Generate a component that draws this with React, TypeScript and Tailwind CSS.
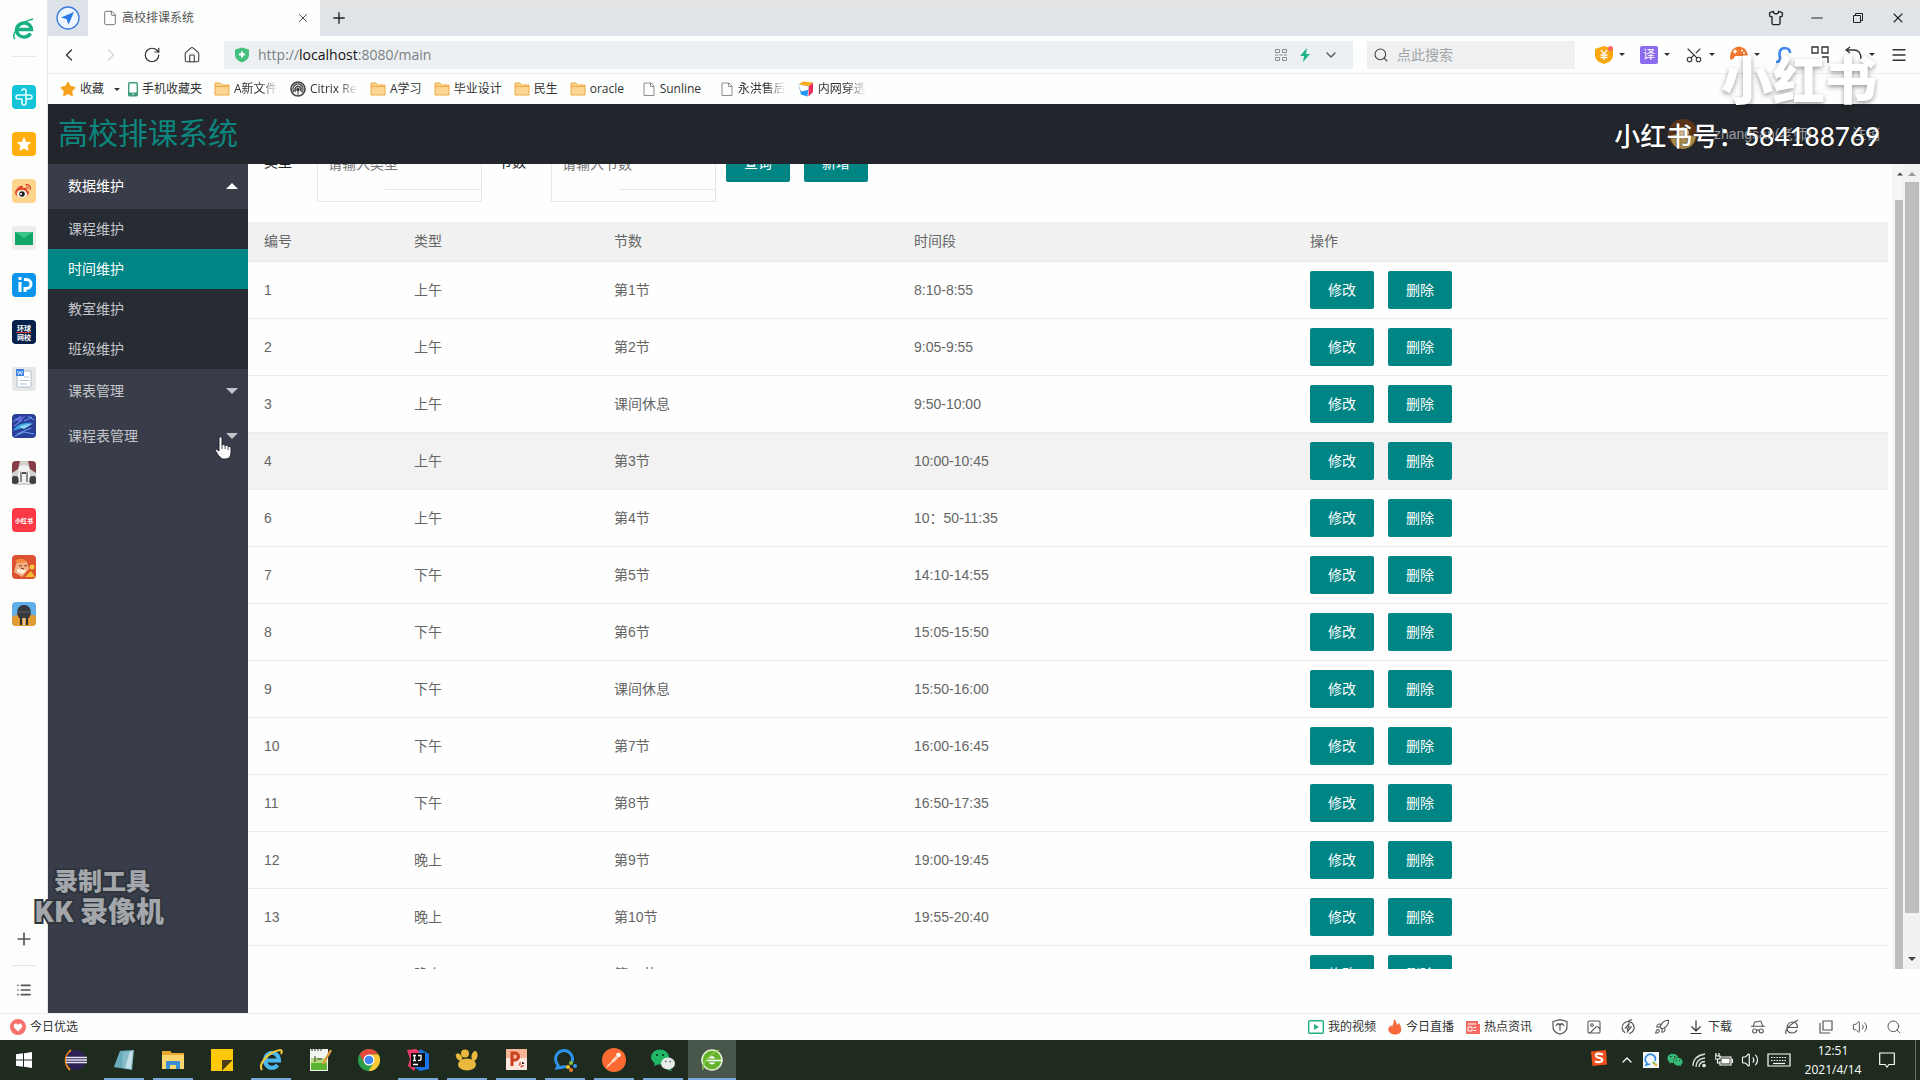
import React from 'react';
import {
  ChevronDown,
  ChevronLeft,
  ChevronRight,
  ChevronUp,
  File,
  HatGlasses,
  Home,
  Image,
  List,
  Menu,
  Minus,
  Plus,
  Rocket,
  RotateCw,
  Scissors,
  Search,
  Shirt,
  Volume2,
  X,
} from 'lucide-react';
import { FaStar, FaWeibo, FaWeixin } from 'react-icons/fa';

interface Lesson {
  id: string;
  type: string;
  section: string;
  time: string;
}

const lessons: Lesson[] = [
  { id: '1', type: '上午', section: '第1节', time: '8:10-8:55' },
  { id: '2', type: '上午', section: '第2节', time: '9:05-9:55' },
  { id: '3', type: '上午', section: '课间休息', time: '9:50-10:00' },
  { id: '4', type: '上午', section: '第3节', time: '10:00-10:45' },
  { id: '6', type: '上午', section: '第4节', time: '10：50-11:35' },
  { id: '7', type: '下午', section: '第5节', time: '14:10-14:55' },
  { id: '8', type: '下午', section: '第6节', time: '15:05-15:50' },
  { id: '9', type: '下午', section: '课间休息', time: '15:50-16:00' },
  { id: '10', type: '下午', section: '第7节', time: '16:00-16:45' },
  { id: '11', type: '下午', section: '第8节', time: '16:50-17:35' },
  { id: '12', type: '晚上', section: '第9节', time: '19:00-19:45' },
  { id: '13', type: '晚上', section: '第10节', time: '19:55-20:40' },
  { id: '', type: '晚上', section: '第11节', time: '' },
];

const Caret: React.FC<{ className?: string; up?: boolean }> = ({ className, up }) => (
  <svg viewBox="0 0 12 6" className={className} fill="currentColor">
    <path d={up ? 'M0 6 6 0l6 6z' : 'M0 0h12L6 6z'} />
  </svg>
);

const FolderIcon = () => (
  <svg viewBox="0 0 16 16" className="size-4 shrink-0">
    <path d="M1 2h5l1.500 2H15v10H1z" fill="#fdd593" stroke="#eda945" />
    <path d="M1 5.500h14" stroke="#eda945" />
  </svg>
);

const PageIcon = () => (
  <svg viewBox="0 0 12 16" className="h-4 w-3.5 shrink-0" fill="none" stroke="#8e8e8e">
    <path d="M1 2h7l3 3v9.500H1zM7.500 2v3.500H11" />
  </svg>
);

const PhoneIcon = () => (
  <svg viewBox="0 0 10 16" className="h-4 w-2.5 shrink-0">
    <rect x=".7" y="1.700" width="8.600" height="13" rx="1" fill="#fff" stroke="#3e9c78" strokeWidth="1.400" />
    <path d="M.7 11.500h8.600v2.500H.7z" fill="#3e9c78" />
    <circle cx="5" cy="13" r=".8" fill="#fff" />
  </svg>
);

const SpiralIcon = () => (
  <svg viewBox="0 0 16 16" className="size-4 shrink-0" fill="none" stroke="#444">
    <circle cx="8" cy="8" r="7" strokeWidth="1.600" />
    <path d="M4 11a5 5 0 1 1 7.500.5M6 10.500a3 3 0 1 1 4.500-.5" strokeWidth="1.400" />
    <circle cx="8" cy="8.500" r="1.400" fill="#333" />
    <path d="M8 9v5" />
  </svg>
);

const CubeIcon = () => (
  <svg viewBox="0 0 16 16" className="size-4 shrink-0">
    <path d="M.5 3.500 5 .5l10 1-4.500 4z" fill="#fbab1b" />
    <path d="M15 1.500V11l-4.500 4.500v-10z" fill="#ee2d5c" />
    <path d="M.5 3.500l10 2-1 10L3 13.500z" fill="#2196f3" />
    <path d="M.5 3.500l10 2-.5 3.500-7 1.500z" fill="#fff" />
  </svg>
);

const bookmarks = [
  { label: '手机收藏夹', icon: <PhoneIcon />, width: '' },
  { label: 'A新文件', icon: <FolderIcon />, width: 'w-11 overflow-hidden mask-r-from-60%' },
  { label: 'Citrix Receiver', icon: <SpiralIcon />, width: 'w-12 overflow-hidden mask-r-from-60%' },
  { label: 'A学习', icon: <FolderIcon />, width: '' },
  { label: '毕业设计', icon: <FolderIcon />, width: '' },
  { label: '民生', icon: <FolderIcon />, width: '' },
  { label: 'oracle', icon: <FolderIcon />, width: 'w-10' },
  { label: 'Sunline', icon: <PageIcon />, width: 'w-12' },
  { label: '永洪售后', icon: <PageIcon />, width: 'w-12 overflow-hidden mask-r-from-60%' },
  { label: '内网穿透', icon: <CubeIcon />, width: 'w-12 overflow-hidden mask-r-from-60%' },
];

const BrowserE: React.FC<{ className?: string; color: string }> = ({ className, color }) => (
  <svg viewBox="0 0 24 24" className={className} fill="none" stroke={color}>
    <path d="M4 12.500h15.500a7.500 7 0 1 0-1 4" strokeWidth="3.400" />
    <path d="M3 22C-1 18 7 5 21 2" strokeWidth="1.500" />
  </svg>
);

const railItems = [
  {
    name: '健康',
    art: (
      <>
        <rect width="24" height="24" rx="4" fill="#15c3d8" />
        <path
          d="M10 6a2 2 0 0 1 4 0v12a2 2 0 0 1-4 0v-4M10 14H6a2 2 0 0 1 0-4h12a2 2 0 0 1 0 4h-4"
          fill="none"
          stroke="#eaffff"
          strokeWidth="1.500"
        />
      </>
    ),
  },
  {
    name: '收藏夹',
    art: (
      <>
        <rect width="24" height="24" rx="4" fill="#ffb010" />
        <path d="m12 5 2.200 4.700 5 .6-3.700 3.500 1 5.200-4.500-2.500L7.500 19l1-5.200-3.700-3.500 5-.6z" fill="#fff" />
      </>
    ),
  },
  {
    name: '微博',
    art: (
      <>
        <rect width="24" height="24" rx="4" fill="#fdd58c" />
        <FaWeibo x="3" y="4" width="18" height="16" color="#e0442b" />
        <ellipse cx="10" cy="15" rx="5" ry="3.600" fill="#fff" />
        <circle cx="10" cy="15" r="2.800" fill="#222" />
        <circle cx="9" cy="15" r="1" fill="#fff" />
      </>
    ),
  },
  {
    name: '邮箱',
    art: (
      <>
        <rect width="24" height="24" rx="3" fill="#eeedeb" />
        <path d="M3 6h18v13H3z" fill="#12a767" />
        <path d="m3 6 9 6 9-6z" fill="#3cc48b" />
      </>
    ),
  },
  {
    name: '办公',
    art: (
      <>
        <rect width="24" height="24" rx="4" fill="#0b96ec" />
        <path d="M8 9v10M8 4v3" stroke="#fff" strokeWidth="3" />
        <path d="M12 6.500h2.500a4 4 0 0 1 0 9H13V19" fill="none" stroke="#fff" strokeWidth="3" />
      </>
    ),
  },
  {
    name: '环球网校',
    art: (
      <>
        <rect width="24" height="24" rx="4" fill="#07214a" />
        <text x="12" y="11" textAnchor="middle" fontSize="7" fontWeight="700" fill="#fff">环球</text>
        <path d="M4 12.500h15" stroke="#d33" />
        <text x="12" y="20" textAnchor="middle" fontSize="7" fontWeight="700" fill="#fff">网校</text>
      </>
    ),
  },
  {
    name: '文档',
    art: (
      <>
        <rect width="24" height="24" rx="3" fill="#e7e7e6" />
        <rect x="5" y="4" width="14" height="16" rx="1" fill="#fff" stroke="#aebdd0" />
        <path d="M12 10h5M8 13.500h9M8 17h7" stroke="#b4c0ce" />
        <rect x="4" y="2" width="8" height="7" fill="#3b7fe6" />
        <path d="m5.500 4 1 3.500L8 4.500l1.500 3 1-3.500" stroke="#fff" fill="none" strokeWidth=".8" />
      </>
    ),
  },
  {
    name: '游戏一',
    art: (
      <>
        <rect width="24" height="24" rx="4" fill="#2b3f98" />
        <path d="M2 5 14 2 8 8z" fill="#6266dd" />
        <path d="M1 17c4-8 12-9 21-8-6 1-8 5-15 6z" fill="#3a9ce0" />
        <path d="M7 13c5-3 10-3 13-3l-8 5z" fill="#8ed2f5" />
        <path d="m3 22 9-4 10 2M16 2l6 4M2 12l8-6M1 8l8-6M12 7l8-4M5 20l14-6" stroke="#6da4ee" fill="none" />
      </>
    ),
  },
  {
    name: '游戏二',
    art: (
      <>
        <rect width="24" height="24" rx="4" fill="#cfcfcd" />
        <path d="M0 4q0-4 4-4h4L6 8 0 12zM24 4q0-4-4-4h-4l2 8 6 4z" fill="#873d46" />
        <circle cx="3" cy="19" r="4" fill="#443f42" />
        <circle cx="21" cy="19" r="4" fill="#443f42" />
        <path d="M7 6q5-4 10 0l1 7-1 9H7L6 13z" fill="#f4f3f0" />
        <path d="m8 10 2 2v9H8zM16 10l-2 2v9h2z" fill="#8b8c90" />
        <path d="M10 11h4v2h-4z" fill="#4a4b4f" />
      </>
    ),
  },
  {
    name: '小红书',
    art: (
      <>
        <rect width="24" height="24" rx="4" fill="#fb3945" />
        <text x="12" y="15" textAnchor="middle" fontSize="6" fontWeight="900" fill="#fff">小红书</text>
      </>
    ),
  },
  {
    name: '游戏三',
    art: (
      <>
        <rect width="24" height="24" rx="4" fill="#dc512f" />
        <path d="M4 9q5-9 11-2l2 7-7 8-8-5z" fill="#f3b183" />
        <path d="M3 6q6-5 12 1l-8 1z" fill="#f1893d" />
        <path d="m5 14 9 1-3 4-6-2z" fill="#fff0dc" />
        <circle cx="20" cy="12" r="2.500" fill="#f7c943" />
        <path d="m13 22 6-6 4 6z" fill="#f5bd32" />
        <path d="M7 11q2-1 3 0M12 11q1-1 3 0M9 13l3 1" stroke="#7a2d1a" fill="none" />
      </>
    ),
  },
  {
    name: '游戏四',
    art: (
      <>
        <rect width="24" height="24" rx="4" fill="#62aee8" />
        <path d="M0 15q5-4 12 0 6-4 12-1v6q0 4-4 4H4q-4 0-4-4z" fill="#e09b35" />
        <path d="M5 12q0-9 7-9t7 9l-2 4H7z" fill="#37383c" />
        <path d="M6 10h12" stroke="#5d5f65" />
        <path d="M9 16v7M15 16v7" stroke="#2c2a28" strokeWidth="2" />
        <path d="M12 16v7" stroke="#d6c3ae" strokeWidth="2" />
      </>
    ),
  },
];

const Rail = () => (
  <aside className="flex w-12 shrink-0 flex-col items-center border-r border-[#e6e8e6] bg-[#fdfefc]">
    <button aria-label="浏览器" className="mt-[17px] flex h-[39px] items-start">
      <BrowserE className="size-6" color="#18b084" />
    </button>
    <div className="h-px w-6 bg-[#e8e8e8]" />
    <div className="mt-7 flex flex-col gap-[23px]">
      {railItems.map((item) => (
        <button key={item.name} aria-label={item.name} className="size-6">
          <svg viewBox="0 0 24 24" className="size-6">
            {item.art}
          </svg>
        </button>
      ))}
    </div>
    <div className="mt-auto flex flex-col items-center pb-[15px] text-[#555]">
      <button aria-label="添加">
        <Plus className="size-5" strokeWidth={2} />
      </button>
      <div className="my-4 h-px w-6 bg-[#e3e3e3]" />
      <button aria-label="列表">
        <List className="size-4" strokeWidth={2.5} />
      </button>
    </div>
  </aside>
);

const TabStrip = () => (
  <div className="flex h-9 bg-linear-to-b from-[#e5e4e2] from-25% to-[#e0e4e9] to-25%">
    <button aria-label="导航" className="flex w-10 items-center justify-center bg-[#dde2e9]">
      <svg viewBox="0 0 24 24" className="size-6">
        <circle cx="12" cy="12" r="11" fill="#eef5fe" stroke="#3a7bdc" strokeWidth="1.300" />
        <path d="M18 6 5 11.500l5.500 1.500 2 5.500z" fill="#2979e8" />
      </svg>
    </button>
    <div className="flex w-58 items-center bg-[#fdfefe] pr-2.5 pl-3.5 text-xs text-[#555]">
      <File className="size-4" strokeWidth={1.2} />
      <span className="ml-1 flex-1">高校排课系统</span>
      <button aria-label="关闭标签页">
        <X className="size-3.5 text-[#333]" strokeWidth={1.5} />
      </button>
    </div>
    <button aria-label="新标签页" className="px-2.5">
      <Plus className="size-[18px] text-[#222]" strokeWidth={1.8} />
    </button>
    <div className="ml-auto flex items-center gap-6 pr-3.5 text-[#222]">
      <button aria-label="皮肤">
        <Shirt className="size-4" strokeWidth={2} />
      </button>
      <button aria-label="最小化">
        <Minus className="size-[18px]" strokeWidth={1.6} />
      </button>
      <button aria-label="还原">
        <svg viewBox="0 0 16 16" className="size-4" fill="none" stroke="currentColor">
          <path d="M3.500 5.500h7v7h-7zM5.500 5V3.500h7v7H11" />
        </svg>
      </button>
      <button aria-label="关闭">
        <X className="size-4" strokeWidth={1.6} />
      </button>
    </div>
  </div>
);

const Tool: React.FC<{ label: string; children: React.ReactNode }> = ({ label, children }) => (
  <button aria-label={label} className="flex w-[45px] items-center gap-1.5">
    {children}
    <Caret className="h-[3px] w-1.5 text-[#333]" />
  </button>
);

const AddressBar = () => (
  <div className="flex h-[38px] items-center border-b border-[#ebedef] bg-[#fdfefe] text-[#333]">
    <div className="flex w-[176px] items-center gap-[22px] pl-[11px]">
      <button aria-label="后退">
        <ChevronLeft className="size-5" strokeWidth={1.6} />
      </button>
      <button aria-label="前进" className="text-[#d5d5d5]">
        <ChevronRight className="size-5" strokeWidth={1.6} />
      </button>
      <button aria-label="刷新">
        <RotateCw className="size-[18px]" strokeWidth={1.6} />
      </button>
      <button aria-label="主页">
        <Home className="size-[18px]" strokeWidth={1.4} />
      </button>
    </div>
    <div className="flex h-7 flex-1 items-center bg-[#edf0f3] px-2.5">
      <svg viewBox="0 0 16 16" className="size-4">
        <path d="M1 2.500 8 .5l7 2V8q0 5-7 7.500Q1 13 1 8z" fill="#45c07f" />
        <path d="M8 4.500v6M5 7.500h6" stroke="#fff" strokeWidth="2" />
      </svg>
      <a href="http://localhost:8080/main" className="ml-2 flex-1 text-sm text-[#7c7f82]">
        http://<span className="text-[#111]">localhost</span>:8080/main
      </a>
      <div className="flex items-center gap-3 text-[#8a8d90]">
        <svg viewBox="0 0 12 12" className="size-3" fill="none" stroke="currentColor">
          <path d="M.5.5h4v3h-4zM7.500.5h4v3h-4zM.5 8.500h4v3h-4zM7.500 8.500h4v3h-4zM0 6h3M4 6h4M9 6h3" />
        </svg>
        <svg viewBox="0 0 12 14" className="h-3.5 w-3">
          <path d="M8 0 1 8h4l-1 6 7-8H7z" fill="#1eb487" />
        </svg>
        <ChevronDown className="mr-1 size-4 text-[#555]" />
      </div>
    </div>
    <label className="ml-3.5 flex h-7 w-[208px] items-center gap-2 bg-[#eef0f2] px-1.5">
      <Search className="size-4 text-[#444]" strokeWidth={1.6} />
      <input
        aria-label="搜索"
        placeholder="点此搜索"
        className="w-40 bg-transparent text-sm outline-none placeholder:text-[#a1a3a5]"
      />
    </label>
    <div className="ml-5 flex items-center pr-3">
      <Tool label="安全红包">
        <svg viewBox="0 0 18 18" className="size-[18px]">
          <path d="M0 3 9 0l9 3v7q0 5-9 8-9-3-9-8z" fill="#f9a70d" />
          <path d="m6 4 3 4 3-4M9 8v6M5.500 9h7M5.500 11.500h7" stroke="#fff" fill="none" strokeWidth="1.300" />
          <circle cx="15.500" cy="2.500" r="2.500" fill="#f66" />
        </svg>
      </Tool>
      <Tool label="翻译">
        <span className="flex size-[18px] items-center justify-center rounded-xs bg-[#8b6cec] text-xs text-white">译</span>
      </Tool>
      <Tool label="截图">
        <Scissors className="size-[18px] -rotate-90" strokeWidth={1.5} />
      </Tool>
      <Tool label="游戏">
        <svg viewBox="0 0 18 18" className="size-[18px]">
          <path d="M3 3q6-5 12 0 3 3 3 10-3 2-5-3H5q-2 5-5 3Q0 6 3 3z" fill="#f4762d" />
          <path d="M5 3.500v4M3 5.500h4M11 4.500h2M13 7h2" stroke="#fff" strokeWidth="1.300" />
        </svg>
      </Tool>
      <button aria-label="钥匙" className="w-9">
        <svg viewBox="0 0 18 18" className="size-[18px]" fill="none" stroke="#4489ee" strokeWidth="2.600">
          <path d="M1 16q4 0 4-4-2-9 4-10 6 0 6 5" />
        </svg>
      </button>
      <button aria-label="扩展" className="w-[34px]">
        <svg viewBox="0 0 18 18" className="size-[18px]" fill="none" stroke="#333" strokeWidth="1.300">
          <path d="M1 1h6v6H1zM11 1h6v6h-6zM11 11h6v6" />
        </svg>
      </button>
      <Tool label="撤销">
        <svg viewBox="0 0 18 18" className="size-[18px]" fill="none" stroke="#333" strokeWidth="1.300">
          <path d="M5 1 1 4l4 3M1 4h8q7 0 7 9" />
        </svg>
      </Tool>
      <button aria-label="菜单">
        <Menu className="size-[18px]" strokeWidth={1.8} />
      </button>
    </div>
  </div>
);

const Bookmarks = () => (
  <div className="flex h-[30px] items-center bg-[#fdfefe] pl-3 text-xs text-[#333]">
    <button className="mr-2 flex items-center gap-1">
      <FaStar className="size-4 text-[#f7a11a]" />
      收藏
      <Caret className="ml-1.5 h-[3px] w-1.5" />
    </button>
    <div className="flex gap-3">
      {bookmarks.map((b) => (
        <a key={b.label} href="#" className="flex items-center gap-1">
          {b.icon}
          <span className={`whitespace-nowrap ${b.width}`}>{b.label}</span>
        </a>
      ))}
    </div>
  </div>
);

const SideMenu = () => (
  <nav className="w-50 shrink-0 bg-[#393d49] text-sm text-[#c3c5c9]">
    <button className="flex h-[45px] w-full items-center justify-between pr-2.5 pb-0.5 pl-5 text-white">
      数据维护
      <Caret up className="h-1.5 w-3" />
    </button>
    <ul className="bg-[#272b33]">
      <li>
        <a href="#" className="flex h-10 items-center pl-5">课程维护</a>
      </li>
      <li>
        <a href="#" className="flex h-10 items-center bg-[#008585] pl-5 text-white">时间维护</a>
      </li>
      <li>
        <a href="#" className="flex h-10 items-center pl-5">教室维护</a>
      </li>
      <li>
        <a href="#" className="flex h-10 items-center pl-5">班级维护</a>
      </li>
    </ul>
    <button className="flex h-[45px] w-full items-center justify-between pr-2.5 pb-0.5 pl-5">
      课表管理
      <Caret className="h-1.5 w-3" />
    </button>
    <button className="flex h-[45px] w-full items-center justify-between pr-2.5 pb-0.5 pl-5">
      课程表管理
      <Caret className="h-1.5 w-3" />
    </button>
  </nav>
);

const TealButton: React.FC<{ children: React.ReactNode }> = ({ children }) => (
  <button className="h-[38px] w-16 rounded-xs bg-[#008585] text-sm text-white">{children}</button>
);

const Field: React.FC<{ id: string; label: string; placeholder: string }> = ({ id, label, placeholder }) => (
  <div className="flex">
    <label htmlFor={id} className="w-[53px] pt-2 text-[#222]">
      {label}
    </label>
    <div className="h-[58px] w-[165px] border border-[#e6e6e6]">
      <input
        id={id}
        placeholder={placeholder}
        className="h-[37px] w-full bg-transparent px-2.5 outline-none placeholder:text-[#757575]"
      />
      <div className="mt-[7px] ml-auto h-px w-24 bg-[#e6e8e6]" />
    </div>
  </div>
);

const Content = () => (
  <main className="mb-11 flex min-w-0 flex-1 overflow-hidden">
    <div className="min-w-0 flex-1 overflow-hidden">
      <form className="-mt-5 flex h-[78px] items-start gap-4 pl-4 text-sm">
        <Field id="type" label="类型" placeholder="请输入类型" />
        <Field id="section" label="节数" placeholder="请输入节数" />
        <div className="-ml-1.5 flex gap-3.5">
          <TealButton>查询</TealButton>
          <TealButton>新增</TealButton>
        </div>
      </form>
      <table className="w-full table-fixed border-collapse text-left text-sm text-[#666]">
        <thead className="bg-[#f0f1f0]">
          <tr className="h-[39px] border-b border-[#e8e9e8]">
            <th className="w-[151px] pl-4 font-normal">编号</th>
            <th className="w-[200px] pl-[15px] font-normal">类型</th>
            <th className="w-[300px] pl-[15px] font-normal">节数</th>
            <th className="w-[396px] pl-[15px] font-normal">时间段</th>
            <th className="pl-[15px] font-normal">操作</th>
          </tr>
        </thead>
        <tbody>
          {lessons.map((l) => (
            <tr
              key={l.section + l.time}
              className={`h-[57px] border-b border-[#ececec] ${l.id === '4' ? 'bg-[#f1f2f1]' : ''}`}
            >
              <td className="pl-4">{l.id}</td>
              <td className="pl-[15px]">{l.type}</td>
              <td className="pl-[15px]">{l.section}</td>
              <td className="pl-[15px]">{l.time}</td>
              <td className="pl-[15px]">
                <div className="flex gap-3.5">
                  <TealButton>修改</TealButton>
                  <TealButton>删除</TealButton>
                </div>
              </td>
            </tr>
          ))}
        </tbody>
      </table>
    </div>
    {/* inner frame scrollbar, then the page one */}
    <div className="ml-1 flex w-[11px] flex-col items-end bg-[#f4f5f4]">
      <Caret up className="mt-2 mb-6 h-1 w-1.5 text-[#444]" />
      <div className="w-2 flex-1 bg-[#bdbdbd]" />
    </div>
    <div className="flex w-[17px] flex-col items-center bg-[#f0f1f0]">
      <Caret up className="mt-2 h-1 w-2 text-[#999]" />
      <div className="mt-1.5 mb-11 w-3.5 flex-1 bg-[#bebebe]" />
      <Caret className="mb-2 h-1 w-2 text-[#444]" />
    </div>
  </main>
);

const StatusBar = () => (
  <div className="flex h-[27px] items-center border-t border-[#eceeec] bg-[#fdfefe] pr-[18px] pl-2.5 text-xs text-[#333]">
    <svg viewBox="0 0 16 16" className="size-4">
      <circle cx="8" cy="8" r="8" fill="#f8716a" />
      <path d="M8 12.500 4 8.500q-1-3 1.500-4Q7 4 8 6q1-2 2.500-1.500 2.500 1 1.500 4z" fill="#fff" />
    </svg>
    <a href="#" className="ml-1">今日优选</a>
    <div className="ml-auto flex items-center gap-3">
      <a href="#" className="flex items-center gap-1">
        <svg viewBox="0 0 16 16" className="size-4">
          <rect x=".7" y="1.700" width="14.600" height="12.600" rx="1" fill="#fff" stroke="#23b083" strokeWidth="1.400" />
          <path d="m6 5 5 3-5 3z" fill="#23b083" />
        </svg>
        我的视频
      </a>
      <a href="#" className="flex items-center gap-1">
        <svg viewBox="0 0 14 16" className="h-4 w-3.5">
          <path d="M6 0q3 3 3 6l2-2q4 6 1 10-5 3-10 0-4-4 1-8l1 2Q6 4 6 0z" fill="#f8693b" />
        </svg>
        今日直播
      </a>
      <a href="#" className="flex items-center gap-1">
        <svg viewBox="0 0 14 14" className="size-3.5">
          <path d="M0 1h12v3h2v10H0z" fill="#f46a62" />
          <path d="M2 4h8M2 7h4v4H2zM7.500 7.500H10M7.500 10.500H10" stroke="#fff" fill="none" />
        </svg>
        热点资讯
      </a>
    </div>
    <div className="ml-5 flex items-center gap-[18px] text-[#555]">
      <button aria-label="安全">
        <svg viewBox="0 0 16 16" className="size-4" fill="none" stroke="currentColor" strokeWidth="1.200">
          <path d="M1 2.500 8 .7l7 1.800V8q0 5-7 7.300Q1 13 1 8z" />
          <path d="M4 7q1-3 4-1 3-2 4 1M5 5q2-1 3 1 1-2 3-1M8 6v5.500" />
        </svg>
      </button>
      <button aria-label="图片">
        <Image className="size-4" strokeWidth={1.6} />
      </button>
      <button aria-label="加速">
        <svg viewBox="0 0 16 16" className="size-4" fill="none" stroke="currentColor" strokeWidth="1.200">
          <path d="M5 13.700A6 6 0 1 1 9 14.500M8.500 1.500 12 .8M9 4.500 5.500 9H8l-.5 3.500L11 8H8.500z" />
        </svg>
      </button>
      <button aria-label="清理">
        <Rocket className="size-4" strokeWidth={1.6} />
      </button>
      <button className="flex items-center gap-1 text-[#333]">
        <svg viewBox="0 0 16 16" className="size-4" fill="none" stroke="currentColor" strokeWidth="1.200">
          <path d="M8 1.500v10M3.500 7.500 8 12l4.500-4.500M2.500 14.500h11" />
        </svg>
        下载
      </button>
      <button aria-label="无痕">
        <HatGlasses className="size-4" strokeWidth={1.6} />
      </button>
      <button aria-label="内核">
        <svg viewBox="0 0 16 16" className="size-4" fill="none" stroke="currentColor" strokeWidth="1.200">
          <path d="M4 8.500h9.500q0-5.500-5-5.500T3 9q0 5 5 5 3.500 0 5-3M2 15Q0 9 14 1" />
        </svg>
      </button>
      <button aria-label="窗口">
        <svg viewBox="0 0 16 16" className="size-4" fill="none" stroke="currentColor" strokeWidth="1.200">
          <path d="M5 2h9v9H5zM2 4v10h10" />
        </svg>
      </button>
      <button aria-label="声音">
        <Volume2 className="size-4" strokeWidth={1.5} />
      </button>
      <button aria-label="缩放">
        <Search className="size-4" strokeWidth={1.5} />
      </button>
    </div>
  </div>
);

const taskbarApps = [
  {
    name: 'Eclipse',
    open: false,
    art: (
      <>
        <path d="M8 2Q-2 12 7 22" stroke="#f08a1d" strokeWidth="2" fill="none" />
        <circle cx="13" cy="12" r="10" fill="#2c2255" />
        <path d="M3 9.500h21M3 12h21M3 14.500h21" stroke="#e8e6f4" strokeWidth="1.300" />
      </>
    ),
  },
  {
    name: '记事本',
    open: true,
    art: (
      <>
        <path d="m8 3 14-1-2 20-18-3z" fill="#7db9c6" />
        <path d="m11 4 10-1-2 18-9-2z" fill="#c4e0e6" />
        <path d="m8 3-6 16 11 1 5-17z" fill="#5aa3b6" opacity=".6" />
      </>
    ),
  },
  {
    name: '文件资源管理器',
    open: true,
    art: (
      <>
        <path d="M1 3h8l2 2h12v16H1z" fill="#e8a92f" />
        <path d="M1 7h22v14H1z" fill="#fbd66f" />
        <path d="M5 21v-8h14v8h-4v-4H9v4z" fill="#3b8ed6" />
      </>
    ),
  },
  {
    name: '便笺',
    open: false,
    art: (
      <>
        <path d="M1 1h22v22H1z" fill="#fdc80a" />
        <path d="M12 23V12h11z" fill="#4a3f18" />
        <path d="M12 23 23 12v11z" fill="#fdc80a" />
      </>
    ),
  },
  {
    name: 'Internet Explorer',
    open: true,
    art: (
      <>
        <path d="M6 12.500h14a7 7.500 0 1 0-1.500 4.500" stroke="#4bb9ee" strokeWidth="4" fill="none" />
        <path d="M3 22C-1 16 9 4 21 2q3 0 1 4" stroke="#f5c83a" strokeWidth="2" fill="none" />
      </>
    ),
  },
  {
    name: '编辑器',
    open: false,
    art: (
      <>
        <path d="M2 1h18v22H2z" fill="#f3f6ee" />
        <path d="M3 14h16v8H3z" fill="#5ab532" />
        <path d="M3 10h16v5H3z" fill="#b6dd7d" />
        <path d="M4 1v2M7 1v2M10 1v2M13 1v2M7 8v6M9 11h5" stroke="#333" />
        <path d="m23 2-8 14" stroke="#e09a3e" strokeWidth="2.500" />
      </>
    ),
  },
  {
    name: 'Chrome',
    open: false,
    art: (
      <>
        <circle cx="12" cy="12" r="11" fill="#2aa04b" />
        <path d="M2.500 6.500A11 11 0 0 1 21.500 6.500H12L7.200 14.800z" fill="#e5493a" />
        <path d="M21.500 6.500A11 11 0 0 1 11.500 23l5.300-8.200L12 6.500z" fill="#fcc934" />
        <circle cx="12" cy="12" r="5.500" fill="#fff" />
        <circle cx="12" cy="12" r="4.300" fill="#4285f4" />
      </>
    ),
  },
  {
    name: 'IntelliJ IDEA',
    open: true,
    art: (
      <>
        <path d="m1 2 9-1 6 4-8 18-6-5 2-7z" fill="#ee3c6a" />
        <path d="m14 1 9 5v15l-9 2-6-4z" fill="#1a74e8" />
        <path d="M5 5h14v14H5z" fill="#111" />
        <path d="M7 7.500h3M8.500 7.500v5M7 12.500h3M12 7.500h3v4q0 1-3 1M7 16.500h5" stroke="#fff" fill="none" strokeWidth="1.300" />
      </>
    ),
  },
  {
    name: 'Navicat',
    open: true,
    art: (
      <g fill="#e9b83c">
        <ellipse cx="12" cy="16.500" rx="9" ry="6" />
        <ellipse cx="4" cy="9" rx="2.500" ry="4" transform="rotate(-35 4 9)" />
        <ellipse cx="10" cy="5.500" rx="4" ry="4" />
        <ellipse cx="19.500" cy="8" rx="3" ry="5" transform="rotate(10 19.500 8)" />
      </g>
    ),
  },
  {
    name: 'PowerPoint',
    open: true,
    art: (
      <>
        <path d="M2 1h21v21H2z" fill="#f7b596" />
        <path d="M2 10h21v12H2z" fill="#fbe7de" />
        <path d="M8 18V5h3a3.500 3.500 0 0 1 0 7H8" stroke="#c8401c" strokeWidth="3" fill="none" />
        <circle cx="17.500" cy="16.500" r="3.500" fill="#e8705a" stroke="#fff" />
        <path d="M17.500 13v3.500H21M17.500 16.500 15 19" stroke="#fff" />
      </>
    ),
  },
  {
    name: '企业微信',
    open: true,
    art: (
      <>
        <path d="M19 14A8.500 8.500 0 1 0 5 17l-1 3 9-1.500" stroke="#2f93ea" strokeWidth="3" fill="none" />
        <circle cx="18" cy="15" r="2" fill="#86c53c" />
        <circle cx="22" cy="18" r="2" fill="#3a9be8" />
        <circle cx="18" cy="22" r="2" fill="#ee7e34" />
        <circle cx="15" cy="19" r="2" fill="#f7c32f" />
      </>
    ),
  },
  {
    name: 'Postman',
    open: true,
    art: (
      <>
        <circle cx="12" cy="12" r="12" fill="#fb6b31" />
        <path d="m5 19 2-2 6-6" stroke="#ffe3d4" strokeWidth="1.200" />
        <path d="m9 15 1-3 4-4 2 2-4 4z" fill="#ffd9c6" />
        <circle cx="16.500" cy="7" r="2.300" fill="#fff" />
      </>
    ),
  },
  {
    name: '微信',
    open: true,
    art: (
      <>
        <ellipse cx="9" cy="9" rx="9" ry="7.500" fill="#1fb765" />
        <path d="m4 14-1 4 5-2zM19 20l2 3-5-1z" fill="#1fb765" />
        <ellipse cx="17" cy="15.500" rx="7" ry="6" fill="#e6ebe8" />
        <path d="M5 7h2M11 7h2" stroke="#0b4f2b" strokeWidth="2" />
        <path d="M14 13.500h1.500M18.500 13.500H20" stroke="#667" strokeWidth="1.500" />
      </>
    ),
  },
  {
    name: '360浏览器',
    open: true,
    active: true,
    art: (
      <>
        <circle cx="12" cy="12" r="10" fill="#62b22c" stroke="#e4f4d2" strokeWidth="1.500" />
        <path d="M7 12.500h15" stroke="#fff" strokeWidth="1.500" />
        <path d="M8.500 10.500q3.500-5 7 0zM8.500 14.500h7q-3.500 4-7 0z" fill="#fff" />
        <path d="M3 22q-1-6 5-12T19 2" stroke="#93d04d" strokeWidth="1.200" fill="none" />
      </>
    ),
  },
];

const Taskbar = () => (
  <footer className="flex h-10 items-stretch bg-[#1f2b1e] text-white">
    <button aria-label="开始" className="flex w-12 items-center justify-center">
      <svg viewBox="0 0 16 16" className="size-4" fill="#fff">
        <path d="M0 2.300 7 1.300v6.200H0zM8 1.200 16 0v7.500H8zM0 8.500h7v6.200l-7-1zM8 8.500h8V16l-8-1.200z" />
      </svg>
    </button>
    <div className="ml-[3px] flex gap-px">
      {taskbarApps.map((app) => (
        <button
          key={app.name}
          aria-label={app.name}
          className={`flex w-12 flex-col items-center justify-end ${app.active ? 'bg-[#48564b]' : ''}`}
        >
          <svg viewBox="0 0 24 24" className="mb-1.5 size-6">
            {app.art}
          </svg>
          <span
            className={`h-0.5 ${app.active ? 'w-12' : 'w-10'} ${app.open ? 'bg-[#79aadb]' : 'bg-transparent'}`}
          />
        </button>
      ))}
    </div>
    <div className="ml-auto flex items-center gap-2 pr-1">
      <svg viewBox="0 0 16 16" className="mb-1 size-4">
        <path d="M0 1.500 15 0l1 14.500L1.500 16z" fill="#f0501c" />
        <path d="M12 4.500Q4.500 2 5 6q.5 1.500 4 2 3 .8 2 3-2 2-7 .5" stroke="#fff" strokeWidth="2.200" fill="none" />
      </svg>
      <ChevronUp className="ml-1 size-4" strokeWidth={1.8} />
      <svg viewBox="0 0 16 16" className="size-4">
        <path d="M0 0h16v16H0z" fill="#f4f8fb" />
        <path d="M12 9a5 5 0 1 0-8 2l-1 2 4-1" stroke="#2f8be8" strokeWidth="1.600" fill="none" />
        <circle cx="11" cy="11" r="1.500" fill="#8bc34a" />
        <circle cx="13" cy="13" r="1.300" fill="#f7b32f" />
      </svg>
      <FaWeixin className="size-4 text-[#35b975]" />
      <svg viewBox="0 0 16 16" className="size-4" fill="none" stroke="#dfe4de" strokeWidth="1.300">
        <path d="M2 14Q2 4 14 2M5 15q0-8 9-9M8 15q0-5 6-5.500" />
        <circle cx="13" cy="13.500" r="1.200" fill="#fff" />
      </svg>
      <svg viewBox="0 0 18 16" className="h-4 w-[18px]" fill="none" stroke="#fff" strokeWidth="1.200">
        <path d="M5 5h11v8H5V9M1 1v3M4 1v3M0 4h5v3H0zM2.500 7v4H5M17.500 7v4" />
        <path d="M7 7h7v4H7z" fill="#fff" />
      </svg>
      <Volume2 className="size-[18px]" strokeWidth={1.5} />
      <svg viewBox="0 0 24 16" className="h-4 w-6" fill="none" stroke="#fff" strokeWidth="1.200">
        <path d="M1 2h22v12H1z" />
        <path d="M4 5.500h16M4 8.500h16" strokeDasharray="1.500 1.200" />
        <path d="M6 11.500h12" />
      </svg>
      <div className="w-17 text-center text-xs leading-[19px]">
        <div>12:51</div>
        <div>2021/4/14</div>
      </div>
      <svg viewBox="0 0 16 16" className="mr-3 ml-1 size-4" fill="none" stroke="#fff" strokeWidth="1.200">
        <path d="M.7 1h14.600v11.500H10L8 15l-2-2.500H.7z" />
      </svg>
      <div className="h-10 w-px bg-[#657064]" />
    </div>
  </footer>
);

export default function App() {
  return (
    <div className="relative flex h-screen flex-col overflow-hidden bg-[#fdfefd] font-['Open_Sans','Noto_Sans_CJK_SC',sans-serif]">
      <div className="flex min-h-0 flex-1">
        <Rail />
        <div className="flex min-w-0 flex-1 flex-col">
          <TabStrip />
          <AddressBar />
          <Bookmarks />
          <div className="flex min-h-0 flex-1 flex-col font-['Liberation_Sans','Noto_Sans_CJK_SC',sans-serif]">
            <header className="flex h-15 shrink-0 items-center bg-[#22252b] pr-10 pl-2.5">
              <h1 className="text-3xl text-[#0c867e]">高校排课系统</h1>
              <div className="ml-auto flex items-center text-sm text-[#9b9ea3]">
                <svg viewBox="0 0 30 30" className="mr-4 size-[30px]">
                  <circle cx="15" cy="15" r="15" fill="#5b3418" />
                  <path d="M2 18q8-7 26 0-3 12-13 12T2 18z" fill="#a98e4c" />
                  <circle cx="15" cy="14" r="6" fill="#d8bd92" />
                </svg>
                <span>zhangsan(老师)</span>
                <a href="#" className="ml-10">注销</a>
              </div>
            </header>
            <div className="flex min-h-0 flex-1">
              <SideMenu />
              <Content />
            </div>
          </div>
        </div>
      </div>
      <StatusBar />
      <Taskbar />

      <div className="pointer-events-none absolute top-[38px] right-[43px] font-['Noto_Sans_CJK_SC',sans-serif] text-[52px] leading-20 font-black text-white text-shadow-[0_2px_5px_rgb(0_0_0/0.4)]">
        小红书
      </div>
      <div className="pointer-events-none absolute top-[116px] right-10 font-['Lato','Noto_Sans_CJK_SC',sans-serif] text-[26px] leading-10 font-medium text-white text-shadow-[0_0_2px_rgb(0_0_0/0.6)]">
        小红书号：584188769
      </div>
      <div className="pointer-events-none absolute bottom-[156px] left-[34px] font-['Noto_Sans_CJK_SC',sans-serif] font-black text-[#a3a6ab] [paint-order:stroke_fill] [-webkit-text-stroke:4px_#2f353d]">
        <div className="pl-5 text-2xl leading-8">录制工具</div>
        <div className="text-[28px] leading-7">KK 录像机</div>
      </div>
      <svg viewBox="0 0 18 24" className="pointer-events-none absolute top-[436px] left-[214px] h-6 w-[18px]">
        <path
          d="M5 1.500q1.500-1.500 3 0V9q2-1.500 3 .5 2-1 3 1 2-.5 3 1v5q0 6-5 6.500H8Q4 20 1 14q1-2 4 1z"
          fill="#fff"
          stroke="#22252b"
        />
        <path d="M8 9v4M11 10v3M14 11v3" stroke="#22252b" strokeWidth=".8" />
      </svg>
    </div>
  );
}
